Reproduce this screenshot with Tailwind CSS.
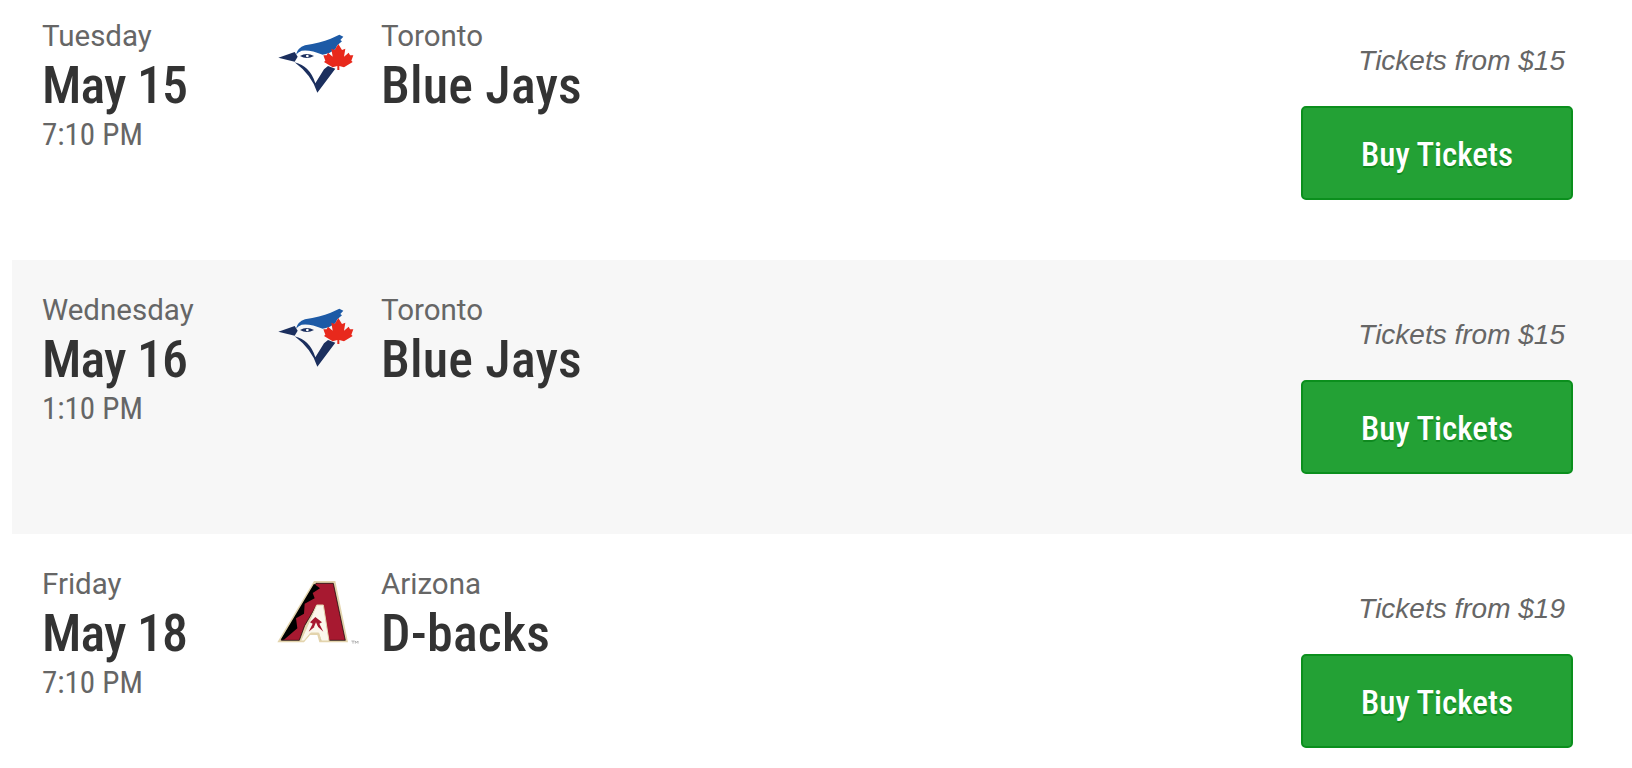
<!DOCTYPE html>
<html lang="en">
<head>
  <meta charset="UTF-8" />
  <title>Tickets</title>
  <script src="https://cdn.jsdelivr.net/npm/@tailwindcss/browser@4"></script>
</head>
<body class="bg-white overflow-hidden h-[768px] font-['Roboto',sans-serif]">
  <main class="pl-[12px] -mt-[14px] h-[782px] overflow-hidden">

    <!-- row 1 -->
    <section class="flex h-[274px]">
      <div class="w-[248px] pl-[30px] pt-[30px] shrink-0">
        <p class="text-[29.5px] leading-[40px] text-[#666]">Tuesday</p>
        <p class="text-[52px] leading-[59px] font-medium text-[#333] font-stretch-condensed tracking-[-0.8px]">May 15</p>
        <p class="text-[31px] leading-[40px] text-[#666] font-stretch-condensed">7:10 PM</p>
      </div>
      <svg class="w-[120px] h-[90px] mt-[34px] shrink-0" viewBox="0 0 360 270">
        <path fill="#1d5aa6" d="M108 104 Q112 84 135 76 Q180 68 212 56 L238 44 L250 50 L241 60 L246 64 L232 76 L226 88 Q208 102 188 104 Q150 88 125 92 Q114 96 108 104 Z"/>
        <path fill="#1b2f5e" d="M55 113 L104 96 L113 110 L104 125 Z"/>
        <path fill="#1b2f5e" d="M120 108 Q140 96 162 108 Q140 120 120 108 Z"/>
        <circle cx="142" cy="108" r="4" fill="#fff"/>
        <path fill="#1b2f5e" d="M104 127 Q150 138 166 190 L192 148 L204 138 L226 146 L172 218 Q155 165 104 127 Z"/>
        <path fill="#e8291c" d="M235 72 L246 90 L256 86 L252 110 L266 98 L270 106 L280 106 L274 122 L278 126 L252 142 L238 138 L238 150 L232 150 L232 138 L218 142 L192 126 L196 122 L190 106 L200 106 L204 98 L218 110 L214 86 L224 90 Z"/>
      </svg>
      <div class="pl-[1px] pt-[30px] grow">
        <p class="text-[29.5px] leading-[40px] text-[#666]">Toronto</p>
        <p class="text-[52px] leading-[59px] font-medium text-[#333] font-stretch-condensed tracking-[0.2px]">Blue Jays</p>
      </div>
      <div class="w-[300px] shrink-0 flex flex-col items-end pr-[59px] pt-[55px]">
        <p class="mr-[8px] text-[28px] leading-[40px] italic text-[#666] font-['Liberation_Sans',sans-serif]">Tickets from $15</p>
        <button class="mt-[25px] w-[272px] h-[94px] pt-[3px] rounded-[5px] bg-[#23a135] border-2 border-[#0b8f1d] text-white text-[33px] font-medium font-stretch-condensed [text-shadow:0_2px_0_#0f8a20]">Buy Tickets</button>
      </div>
    </section>

    <!-- row 2 -->
    <section class="flex h-[274px] bg-[#f7f7f7]">
      <div class="w-[248px] pl-[30px] pt-[30px] shrink-0">
        <p class="text-[29.5px] leading-[40px] text-[#666]">Wednesday</p>
        <p class="text-[52px] leading-[59px] font-medium text-[#333] font-stretch-condensed tracking-[-0.8px]">May 16</p>
        <p class="text-[31px] leading-[40px] text-[#666] font-stretch-condensed">1:10 PM</p>
      </div>
      <svg class="w-[120px] h-[90px] mt-[34px] shrink-0" viewBox="0 0 360 270">
        <path fill="#1d5aa6" d="M108 104 Q112 84 135 76 Q180 68 212 56 L238 44 L250 50 L241 60 L246 64 L232 76 L226 88 Q208 102 188 104 Q150 88 125 92 Q114 96 108 104 Z"/>
        <path fill="#1b2f5e" d="M55 113 L104 96 L113 110 L104 125 Z"/>
        <path fill="#1b2f5e" d="M120 108 Q140 96 162 108 Q140 120 120 108 Z"/>
        <circle cx="142" cy="108" r="4" fill="#fff"/>
        <path fill="#1b2f5e" d="M104 127 Q150 138 166 190 L192 148 L204 138 L226 146 L172 218 Q155 165 104 127 Z"/>
        <path fill="#e8291c" d="M235 72 L246 90 L256 86 L252 110 L266 98 L270 106 L280 106 L274 122 L278 126 L252 142 L238 138 L238 150 L232 150 L232 138 L218 142 L192 126 L196 122 L190 106 L200 106 L204 98 L218 110 L214 86 L224 90 Z"/>
      </svg>
      <div class="pl-[1px] pt-[30px] grow">
        <p class="text-[29.5px] leading-[40px] text-[#666]">Toronto</p>
        <p class="text-[52px] leading-[59px] font-medium text-[#333] font-stretch-condensed tracking-[0.2px]">Blue Jays</p>
      </div>
      <div class="w-[300px] shrink-0 flex flex-col items-end pr-[59px] pt-[55px]">
        <p class="mr-[8px] text-[28px] leading-[40px] italic text-[#666] font-['Liberation_Sans',sans-serif]">Tickets from $15</p>
        <button class="mt-[25px] w-[272px] h-[94px] pt-[3px] rounded-[5px] bg-[#23a135] border-2 border-[#0b8f1d] text-white text-[33px] font-medium font-stretch-condensed [text-shadow:0_2px_0_#0f8a20]">Buy Tickets</button>
      </div>
    </section>

    <!-- row 3 -->
    <section class="flex h-[274px]">
      <div class="w-[248px] pl-[30px] pt-[30px] shrink-0">
        <p class="text-[29.5px] leading-[40px] text-[#666]">Friday</p>
        <p class="text-[52px] leading-[59px] font-medium text-[#333] font-stretch-condensed tracking-[-0.8px]">May 18</p>
        <p class="text-[31px] leading-[40px] text-[#666] font-stretch-condensed">7:10 PM</p>
      </div>
      <svg class="w-[120px] h-[90px] mt-[31px] shrink-0" viewBox="0 0 360 270">
        <path fill="#e3d4ad" d="M52 232 L162 48 L226 48 L264 232 L178 232 L172 210 L150 210 L132 232 Z"/>
        <path fill="#a71930" stroke="#000" stroke-width="2" d="M168 55 L220 55 L256 226 L184 226 L168 124 L134 182 L118 226 L64 226 Z"/>
        <path fill="#000" d="M162 56 L180 70 L158 84 L164 100 L134 116 L132 146 L108 160 L112 190 L72 224 L62 224 Z"/>
        <path fill="#fbf7ec" stroke="#e3d4ad" stroke-width="3" d="M170 120 L190 120 L207 228 L184 228 L176 204 L152 204 L132 228 L122 228 Z"/>
        <path fill="#a71930" d="M166 156 L186 172 L178 176 L190 200 L172 184 L166 184 L146 200 L158 176 L150 172 Z"/>
        <path fill="#fbf7ec" d="M168 172 L174 186 L162 186 Z"/>
        <path fill="none" stroke="#999" stroke-width="2" d="M274 228 L284 228 M279 228 L279 236 M286 236 L286 228 L290 233 L294 228 L294 236"/>
      </svg>
      <div class="pl-[1px] pt-[30px] grow">
        <p class="text-[29.5px] leading-[40px] text-[#666]">Arizona</p>
        <p class="text-[52px] leading-[59px] font-medium text-[#333] font-stretch-condensed tracking-[0.2px]">D-backs</p>
      </div>
      <div class="w-[300px] shrink-0 flex flex-col items-end pr-[59px] pt-[55px]">
        <p class="mr-[8px] text-[28px] leading-[40px] italic text-[#666] font-['Liberation_Sans',sans-serif]">Tickets from $19</p>
        <button class="mt-[25px] w-[272px] h-[94px] pt-[3px] rounded-[5px] bg-[#23a135] border-2 border-[#0b8f1d] text-white text-[33px] font-medium font-stretch-condensed [text-shadow:0_2px_0_#0f8a20]">Buy Tickets</button>
      </div>
    </section>

  </main>
</body>
</html>
